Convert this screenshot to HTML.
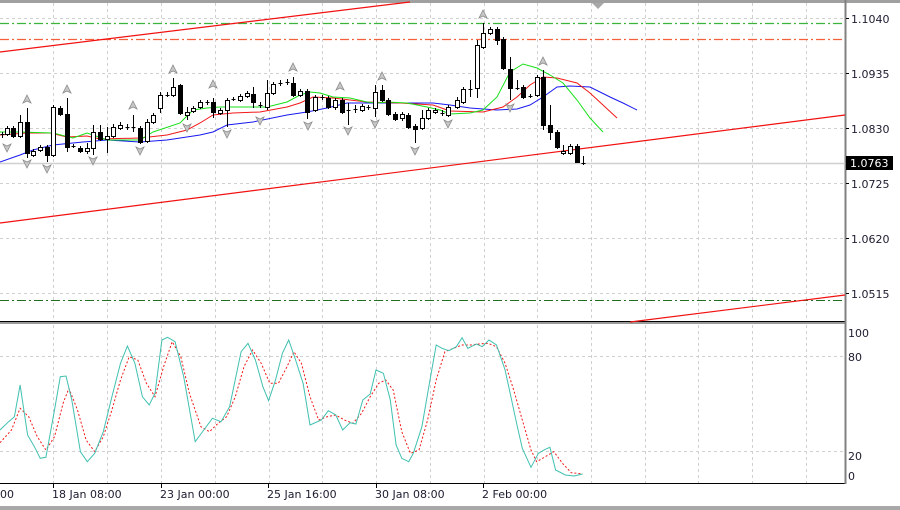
<!DOCTYPE html>
<html><head><meta charset="utf-8"><style>
html,body{margin:0;padding:0;background:#fff;width:900px;height:510px;overflow:hidden}
svg{display:block}
text{font-family:"DejaVu Sans","Liberation Sans",sans-serif;font-size:11px;fill:#1c1c30}
</style></head><body>
<svg width="900" height="510" viewBox="0 0 900 510" xmlns="http://www.w3.org/2000/svg">
<rect width="900" height="510" fill="#fff"/>
<!-- grid -->
<g stroke="#d0d0d0" stroke-width="1" stroke-dasharray="3,3" fill="none">
<path d="M53.5 3V321M107.5 3V321M161.5 3V321M215.5 3V321M269.5 3V321M322.5 3V321M376.5 3V321M430.5 3V321M484.5 3V321M537.5 3V321M591.5 3V321M645.5 3V321M698.5 3V321M752.5 3V321M806.5 3V321"/>
<path d="M53.5 325V483M107.5 325V483M161.5 325V483M215.5 325V483M269.5 325V483M322.5 325V483M376.5 325V483M430.5 325V483M484.5 325V483M537.5 325V483M591.5 325V483M645.5 325V483M698.5 325V483M752.5 325V483M806.5 325V483"/>
<path d="M0 18.5H845M0 73.5H845M0 128.5H845M0 183.5H845M0 238.5H845M0 293.5H845M0 356.5H845M0 451.5H845"/>
</g>
<!-- borders -->
<rect x="0" y="0" width="900" height="3" fill="#a0a0a0"/>
<rect x="0" y="506" width="900" height="4" fill="#a8a8a8"/>
<line x1="0" y1="321.5" x2="846" y2="321.5" stroke="#000"/>
<rect x="0" y="322" width="846" height="2" fill="#9a9a9a"/>
<line x1="0" y1="483.5" x2="846" y2="483.5" stroke="#000"/>
<rect x="844.5" y="0" width="2" height="484" fill="#808080"/>
<!-- horizontal level lines -->
<line x1="0" y1="23.5" x2="845" y2="23.5" stroke="#3cb43c" stroke-width="1.3" stroke-dasharray="9,3,2,3"/>
<line x1="0" y1="39.5" x2="845" y2="39.5" stroke="#f5603c" stroke-width="1.3" stroke-dasharray="9,3,2,3"/>
<line x1="0" y1="300.5" x2="845" y2="300.5" stroke="#1f6f1f" stroke-dasharray="9,3,2,3"/>
<line x1="0" y1="163.5" x2="845" y2="163.5" stroke="#d0d0d0" stroke-width="1.5"/>
<!-- channel lines -->
<g stroke="#f21010" stroke-width="1.2">
<line x1="0" y1="52" x2="410" y2="2"/>
<line x1="0" y1="223" x2="845" y2="115"/>
<line x1="630" y1="322" x2="845" y2="295"/>
</g>
<!-- MAs -->
<g fill="none" stroke-width="1">
<polyline stroke="#1818f0" points="0,162 20,155 33,150 53,145 83,142 107,140 140,142 167,140 200,135 213,132 227,125 253,122 287,115 307,112 327,108 347,103 377,103 400,103 433,103 450,105 470,108 497,110 517,109 530,105 543,97 557,87 570,86 590,87 610,97 623,103 637,110"/>
<polyline stroke="#f21818" points="0,135 27,133 50,133 67,137 87,136 100,139 140,138 167,135 187,130 200,123 213,115 233,113 260,112 287,107 300,103 313,97 333,98 367,102 400,103 433,105 450,111 483,112 503,107 517,97 530,85 543,77 557,78 577,83 590,93 603,105 617,118"/>
<polyline stroke="#18e018" points="0,132 20,132 53,133 73,138 87,133 93,135 107,140 140,140 153,132 180,123 193,110 207,108 220,107 233,107 253,107 267,107 287,102 300,95 310,92 320,93 333,97 350,98 367,102 377,103 387,102 407,103 427,107 440,110 450,114 470,113 483,110 497,97 510,72 523,64 537,68 550,75 563,83 577,100 590,118 603,132"/>
</g>
<!-- candles -->
<g stroke="#000" stroke-width="1" shape-rendering="crispEdges">
<path fill="none" d="M2.5 132V138M7.5 126V136M13.5 126V138M20.5 115V138M27.5 108V158M33.5 149V157M40.5 145V152M47.5 145V162M53.5 105V157M60.5 106V116M67.5 98V152M73.5 144V148M80.5 146V153M87.5 143V154M93.5 125V155M100.5 125V141M107.5 127V153M113.5 124V138M120.5 122V130M127.5 124V130M133.5 115V132M140.5 126V144M147.5 119V143M153.5 113V124M160.5 92V113M167.5 92V97M173.5 78V97M180.5 84V115M187.5 107V120M193.5 106V113M200.5 100V109M207.5 100V105M213.5 98V118M220.5 108V115M227.5 98V127M233.5 97V101M240.5 94V102M247.5 91V98M253.5 87V108M260.5 102V108M267.5 80V110M273.5 82V95M280.5 80V86M287.5 79V85M293.5 77V97M300.5 89V97M307.5 89V119M315.5 95V112M322.5 95V100M328.5 96V109M335.5 98V110M342.5 98V114M348.5 103V125M355.5 105V113M362.5 104V112M368.5 105V110M375.5 85V117M382.5 85V102M388.5 98V116M395.5 112V121M402.5 112V121M408.5 113V129M415.5 124V143M422.5 110V130M428.5 108V120M435.5 108V114M442.5 110V116M448.5 105V117M457.5 97V109M463.5 87V104M470.5 80V97M477.5 40V98M483.5 23V49M490.5 27V35M497.5 27V45M503.5 37V70M510.5 57V100M517.5 80V90M523.5 85V99M530.5 94V98M537.5 75V97M543.5 70V130M550.5 105V140M557.5 130V149M563.5 145V155M570.5 144V155M577.5 144V163M583.5 156V165"/>
<path fill="none" d="M0.5 134.5H4.5M71.5 146.5H75.5M125.5 127.5H129.5M131.5 127.5H135.5M165.5 95.5H169.5M205.5 102.5H209.5M231.5 99.5H235.5M258.5 105.5H262.5M278.5 83.5H282.5M285.5 82.5H289.5M320.5 97.5H324.5M346.5 110.5H350.5M353.5 109.5H357.5M366.5 107.5H370.5M440.5 113.5H444.5M468.5 89.5H472.5M515.5 88.5H519.5M528.5 96.5H532.5M581.5 163.5H585.5"/>
<g fill="#fff">
<rect x="5.5" y="128.5" width="4" height="6"/><rect x="18.5" y="122.5" width="4" height="14"/><rect x="31.5" y="151.5" width="4" height="4"/><rect x="38.5" y="147.5" width="4" height="3"/><rect x="51.5" y="107.5" width="4" height="48"/><rect x="85.5" y="148.5" width="4" height="3"/><rect x="91.5" y="132.5" width="4" height="16"/><rect x="105.5" y="136.5" width="4" height="3"/><rect x="111.5" y="127.5" width="4" height="9"/><rect x="118.5" y="125.5" width="4" height="3"/><rect x="145.5" y="122.5" width="4" height="19"/><rect x="151.5" y="115.5" width="4" height="7"/><rect x="158.5" y="95.5" width="4" height="13"/><rect x="171.5" y="87.5" width="4" height="8"/><rect x="185.5" y="112.5" width="4" height="3"/><rect x="191.5" y="108.5" width="4" height="3"/><rect x="198.5" y="102.5" width="4" height="5"/><rect x="218.5" y="110.5" width="4" height="3"/><rect x="225.5" y="100.5" width="4" height="10"/><rect x="238.5" y="96.5" width="4" height="4"/><rect x="245.5" y="93.5" width="4" height="3"/><rect x="265.5" y="93.5" width="4" height="14"/><rect x="271.5" y="84.5" width="4" height="9"/><rect x="298.5" y="91.5" width="4" height="4"/><rect x="313.5" y="97.5" width="4" height="13"/><rect x="333.5" y="100.5" width="4" height="7"/><rect x="360.5" y="106.5" width="4" height="4"/><rect x="373.5" y="92.5" width="4" height="16"/><rect x="400.5" y="114.5" width="4" height="4"/><rect x="420.5" y="118.5" width="4" height="10"/><rect x="426.5" y="110.5" width="4" height="8"/><rect x="433.5" y="110.5" width="4" height="2"/><rect x="446.5" y="107.5" width="4" height="8"/><rect x="455.5" y="100.5" width="4" height="7"/><rect x="461.5" y="89.5" width="4" height="13"/><rect x="475.5" y="45.5" width="4" height="43"/><rect x="481.5" y="33.5" width="4" height="14"/><rect x="488.5" y="29.5" width="4" height="4"/><rect x="535.5" y="77.5" width="4" height="18"/><rect x="561.5" y="151.5" width="4" height="2"/><rect x="568.5" y="146.5" width="4" height="7"/>
</g>
<g fill="#000">
<rect x="11.5" y="128.5" width="4" height="8"/><rect x="25.5" y="122.5" width="4" height="31"/><rect x="45.5" y="147.5" width="4" height="8"/><rect x="58.5" y="108.5" width="4" height="6"/><rect x="65.5" y="114.5" width="4" height="33"/><rect x="78.5" y="148.5" width="4" height="3"/><rect x="98.5" y="132.5" width="4" height="7"/><rect x="138.5" y="128.5" width="4" height="14"/><rect x="178.5" y="85.5" width="4" height="28"/><rect x="211.5" y="102.5" width="4" height="10"/><rect x="251.5" y="94.5" width="4" height="8"/><rect x="291.5" y="83.5" width="4" height="12"/><rect x="305.5" y="91.5" width="4" height="21"/><rect x="326.5" y="98.5" width="4" height="9"/><rect x="340.5" y="100.5" width="4" height="12"/><rect x="380.5" y="90.5" width="4" height="10"/><rect x="386.5" y="100.5" width="4" height="14"/><rect x="393.5" y="114.5" width="4" height="5"/><rect x="406.5" y="115.5" width="4" height="12"/><rect x="413.5" y="126.5" width="4" height="3"/><rect x="495.5" y="29.5" width="4" height="11"/><rect x="501.5" y="39.5" width="4" height="29"/><rect x="508.5" y="69.5" width="4" height="19"/><rect x="521.5" y="87.5" width="4" height="10"/><rect x="541.5" y="77.5" width="4" height="48"/><rect x="548.5" y="125.5" width="4" height="7"/><rect x="555.5" y="132.5" width="4" height="15"/><rect x="575.5" y="146.5" width="4" height="16"/>
</g>
</g>
<!-- fractal arrows -->
<defs>
<path id="up" d="M0,-5 L4,3 L0,1 L-4,3 Z" fill="#c8c8c8" stroke="#8a8a8a" stroke-width="0.8"/>
<path id="dn" d="M0,5 L4,-3 L0,-1 L-4,-3 Z" fill="#c8c8c8" stroke="#8a8a8a" stroke-width="0.8"/>
</defs>
<g>
<use href="#up" x="27" y="100"/><use href="#up" x="67" y="90"/><use href="#up" x="133" y="106"/><use href="#up" x="173" y="70"/><use href="#up" x="213" y="85"/><use href="#up" x="293" y="68"/><use href="#up" x="340" y="87"/><use href="#up" x="382" y="77"/><use href="#up" x="483" y="15"/><use href="#up" x="543" y="62"/>
<use href="#dn" x="7" y="147"/><use href="#dn" x="27" y="163"/><use href="#dn" x="47" y="168"/><use href="#dn" x="93" y="160"/><use href="#dn" x="140" y="150"/><use href="#dn" x="187" y="127"/><use href="#dn" x="227" y="133"/><use href="#dn" x="260" y="120"/><use href="#dn" x="308" y="125"/><use href="#dn" x="348" y="130"/><use href="#dn" x="375" y="123"/><use href="#dn" x="415" y="150"/><use href="#dn" x="448" y="123"/><use href="#dn" x="510" y="107"/>
<path d="M592,3 L604,3 L598,9 Z" fill="#a8a8a8"/>
</g>
<!-- stochastic -->
<polyline fill="none" stroke="#f21818" stroke-width="1" stroke-dasharray="2,2" points="0,442.7 11.5,430 20.1,408.3 28.7,416.7 37.3,436.7 45.9,450 54.5,436.7 63.1,403.3 68.9,388.3 77.5,410 86.1,440 94.7,451.7 103.3,436.7 111.9,410 120.5,380 129.2,356.7 137.8,360 146.4,383.3 155,396.7 163.6,366.7 172.2,341.7 180.8,356.7 189.4,393.3 200.9,426.7 209.5,431.7 218.1,423.3 226.7,416.7 235.3,396.7 244,366.7 252.6,350 261.2,363.3 269.8,383.3 278.4,383.3 287,366.7 293.9,351.7 301.4,363.3 310,396.7 318.6,420 327.2,416.7 335.8,415 344.4,420 353,423.3 361.6,413.3 370.2,396.7 378.8,383.3 385.7,380 393.2,390 401.8,431.7 410.4,453.3 419,450 427.6,420 436.2,380 444.9,351.7 453.5,348.3 462.1,345 470.7,345 479.3,344 487.9,343.3 496.5,346.7 505.1,363.3 513.7,390 522.3,420 531,450 536.7,461.7 545.3,456.7 553.9,451.7 562.5,463.3 571.2,472.7 582.6,474"/>
<polyline fill="none" stroke="#40c0b0" stroke-width="1" points="0,430 8.6,421.7 14.4,416.7 20.1,385 27.6,435 34.4,446.7 40.2,458.3 45.9,457.3 54.5,410 60.3,376.7 66,376 71.8,400 80.4,451.7 87.3,461.7 94.7,453.3 103.3,431.7 111.9,396.7 120.5,363.3 127.4,346 134.9,363.3 142.4,396.7 149.2,405 155,393.3 161.9,340 167.6,337.3 175.1,341.7 183.7,376.7 195.2,441.7 203.8,430 212.4,418.3 221,421.7 229.6,406.7 241.1,351.7 248,343.3 255.4,360 262.9,386.7 268.6,400.7 275.5,380 282.4,353.3 288.7,340 295.6,360 303.1,383.3 310,425 321.4,420 328.3,410.7 335.8,415 342.7,430 350.1,422.7 355.9,424 362.8,400 370.2,394 376,370 383.4,373.3 390.3,400 396.1,445 401.8,458.3 408.7,461.7 413.3,453.3 421.9,426.7 429.4,383.3 436.2,345 442,348.3 448.9,350.7 456.3,346.7 462.1,337.7 467.8,348.3 476.4,344 482.2,346.7 489,340 496.5,345 505.1,370 510.9,396.7 516.6,423.3 522.3,448.3 531,467.3 538.4,453.3 545.3,449.3 549.9,447.3 555.6,470 565.4,475 574,476 582.6,474"/>
<!-- axis ticks -->
<g stroke="#000"><path d="M846 18.5H849M846 73.5H849M846 128.5H849M846 183.5H849M846 238.5H849M846 293.5H849M53.5 484V488M161.5 484V488M268.5 484V488M376.5 484V488M483.5 484V488"/></g>
<!-- price labels -->
<text x="851" y="23">1.1040</text>
<text x="851" y="78">1.0935</text>
<text x="851" y="133">1.0830</text>
<rect x="846" y="156" width="47" height="14" fill="#000"/>
<text x="850" y="167" style="fill:#fff">1.0763</text>
<text x="851" y="188">1.0725</text>
<text x="851" y="243">1.0620</text>
<text x="851" y="298">1.0515</text>
<text x="848" y="337">100</text>
<text x="848" y="361">80</text>
<text x="848" y="460">20</text>
<text x="848" y="480">0</text>
<text x="14" y="498" text-anchor="end">16 Jan 00:00</text>
<text x="52" y="498">18 Jan 08:00</text>
<text x="160" y="498">23 Jan 00:00</text>
<text x="267" y="498">25 Jan 16:00</text>
<text x="375" y="498">30 Jan 08:00</text>
<text x="482" y="498">2 Feb 00:00</text>
</svg>
</body></html>
